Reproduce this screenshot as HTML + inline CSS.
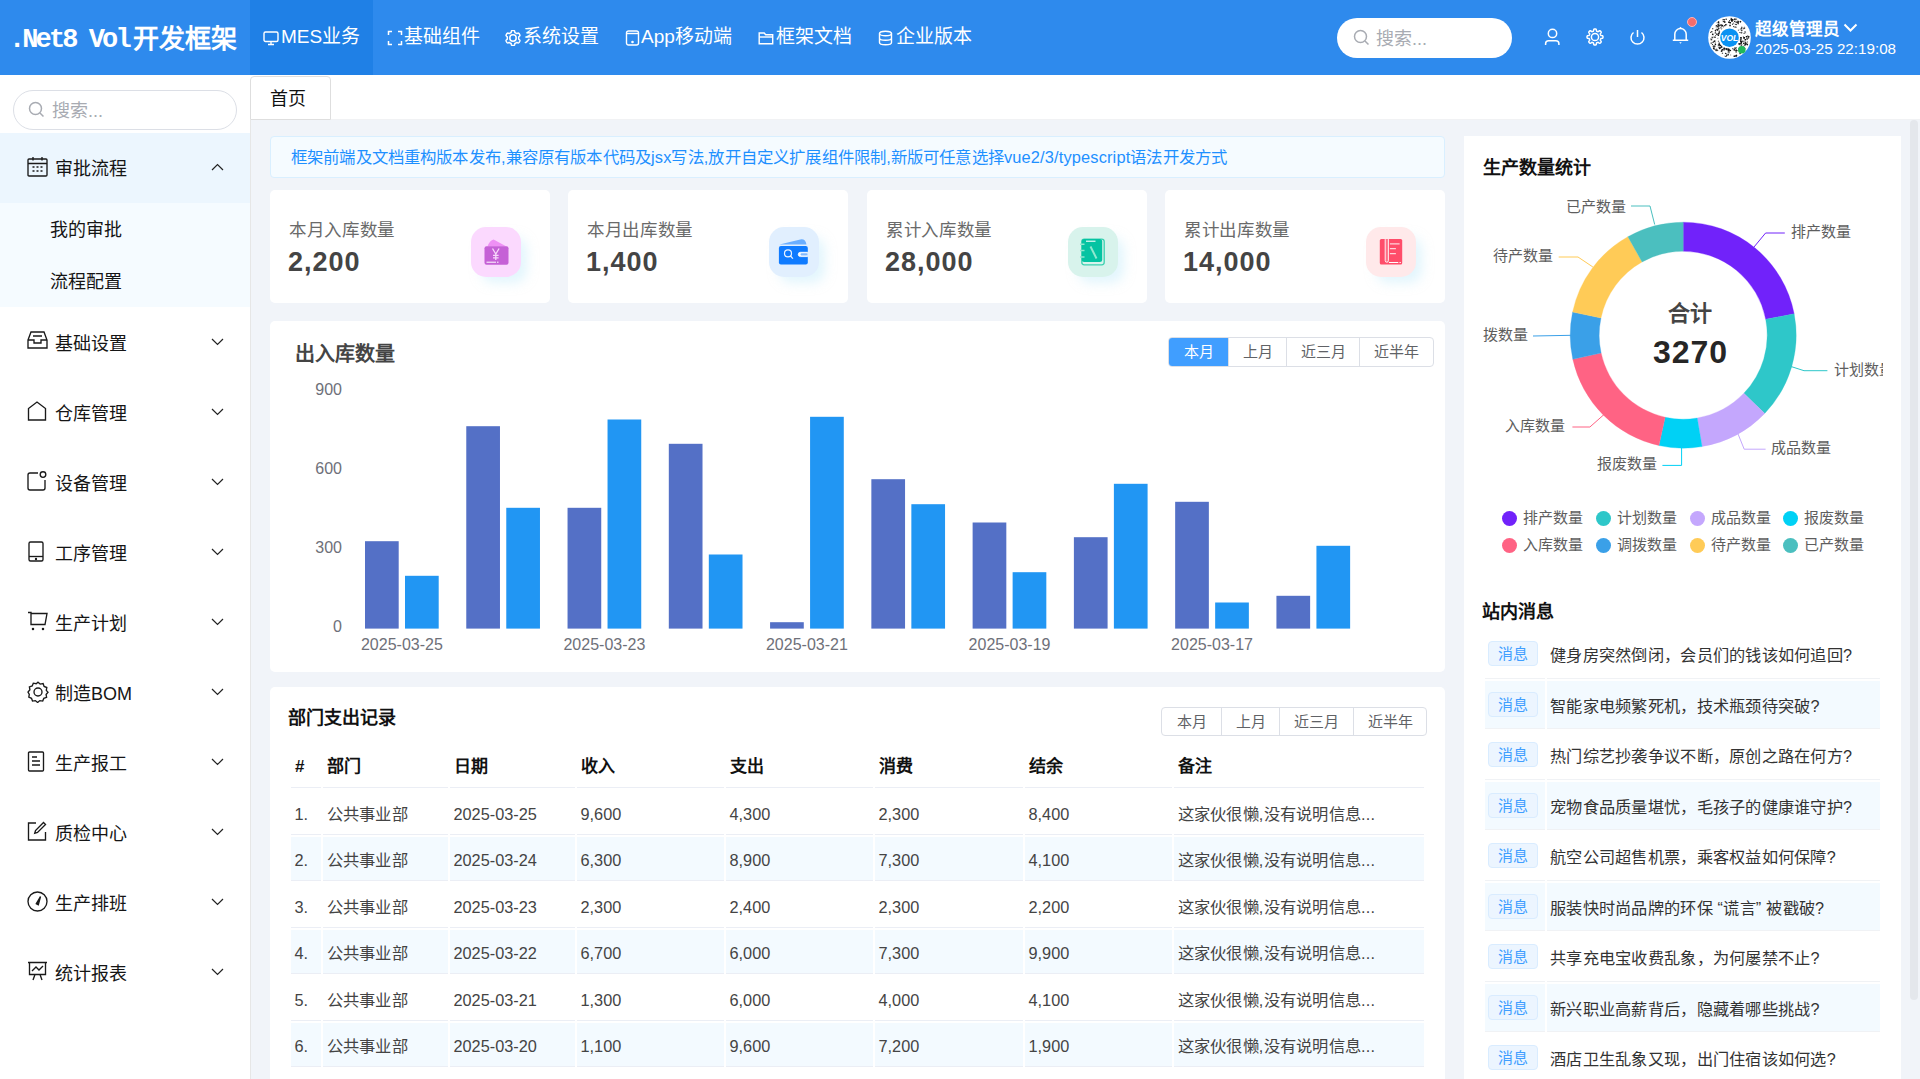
<!DOCTYPE html><html lang="zh-CN"><head><meta charset="utf-8"><style>
*{box-sizing:border-box;margin:0;padding:0}
html,body{width:1920px;height:1079px;overflow:hidden;background:#f1f4f9;font-family:"Liberation Sans",sans-serif;color:#303133}
.a{position:absolute;white-space:nowrap}
#hdr{position:absolute;left:0;top:0;width:1920px;height:75px;background:#2e8aed}
.nav{position:absolute;top:26px;height:22px;line-height:22px;color:#fff;font-size:19px;white-space:nowrap}
.mt{position:absolute;font-size:18px;color:#151515;line-height:20px;white-space:nowrap}
.ic{position:absolute}
.card{position:absolute;background:#fff;border-radius:5px}
.lbl{position:absolute;letter-spacing:.7px;font-size:17.5px;color:#6a6a6a;line-height:20px;white-space:nowrap}
.val{position:absolute;font-size:27px;font-weight:bold;color:#444;line-height:30px;white-space:nowrap;letter-spacing:1px}
.ib{position:absolute;width:50px;height:50px;border-radius:15px;box-shadow:8px 8px 11px -2px rgba(200,238,252,.5)}
.bg{position:absolute;display:flex;border:1px solid #dcdfe6;border-radius:4px;overflow:hidden;background:#fff}
.bg div{border-left:1px solid #dcdfe6;text-align:center;color:#606266;font-size:15px}
.bg div:first-child{border-left:none}
.th{position:absolute;font-size:17px;font-weight:bold;color:#111;line-height:20px;white-space:nowrap}
.td{position:absolute;font-size:16.3px;color:#444;line-height:20px;white-space:nowrap}
.tag{position:absolute;width:50px;height:25px;background:#ecf5ff;border:1px solid #d9ecff;border-radius:4px;color:#409eff;font-size:15px;line-height:23px;text-align:center}
.msg{position:absolute;letter-spacing:.28px;font-size:16.2px;color:#333;line-height:20px;white-space:nowrap}
.pl{position:absolute;font-size:15px;color:#5e5e5e;line-height:18px;white-space:nowrap}
</style></head><body>
<div id="hdr">
<div class="a" style="left:250px;top:0;width:123px;height:75px;background:#1f80e6"></div>
<div class="a" style="left:9px;top:18px;color:#fff;font-weight:bold;font-size:27px;line-height:40px"><span style="font-family:'Liberation Mono',monospace;letter-spacing:-2.9px">.Net8 Vol</span><span style="font-size:26px;position:relative;top:1px;margin-left:4px">开发框架</span></div>
<div class="a" style="left:263px;top:30px;line-height:0"><svg width="16" height="16" viewBox="0 0 16 16" fill="none" stroke="#fff" stroke-width="1.4"><rect x="1" y="2" width="14" height="9.5" rx="1.5"/><path d="M5 14.5h6M8 11.5v3"/></svg></div>
<div class="nav" style="left:281px">MES业务</div>
<div class="a" style="left:387px;top:30px;line-height:0"><svg width="16" height="16" viewBox="0 0 16 16" fill="none" stroke="#fff" stroke-width="1.5"><path d="M5 1.5H1.5V5M11 1.5h3.5V5M1.5 11v3.5H5M14.5 11v3.5H11"/></svg></div>
<div class="nav" style="left:404px">基础组件</div>
<div class="a" style="left:505px;top:30px;line-height:0"><svg width="16" height="16" viewBox="0 0 16 16" fill="none" stroke="#fff" stroke-width="1.5"><path d="M8.00 0.50L8.39 0.52L8.78 0.55L9.17 0.64L9.51 0.90L9.71 1.62L9.84 2.35L10.06 2.63L10.32 2.78L10.59 2.92L10.85 3.06L11.11 3.21L11.36 3.38L11.62 3.53L11.98 3.58L12.67 3.33L13.39 3.14L13.79 3.31L14.06 3.60L14.29 3.92L14.49 4.25L14.68 4.60L14.84 4.96L14.95 5.33L14.90 5.76L14.38 6.29L13.81 6.76L13.68 7.10L13.68 7.40L13.70 7.70L13.70 8.00L13.70 8.30L13.68 8.60L13.68 8.90L13.81 9.24L14.38 9.71L14.90 10.24L14.95 10.67L14.84 11.04L14.68 11.40L14.49 11.75L14.29 12.08L14.06 12.40L13.79 12.69L13.39 12.86L12.67 12.67L11.98 12.42L11.62 12.47L11.36 12.62L11.11 12.79L10.85 12.94L10.59 13.08L10.32 13.22L10.06 13.37L9.84 13.65L9.71 14.38L9.51 15.10L9.17 15.36L8.78 15.45L8.39 15.48L8.00 15.50L7.61 15.48L7.22 15.45L6.83 15.36L6.49 15.10L6.29 14.38L6.16 13.65L5.94 13.37L5.68 13.22L5.41 13.08L5.15 12.94L4.89 12.79L4.64 12.62L4.38 12.47L4.02 12.42L3.33 12.67L2.61 12.86L2.21 12.69L1.94 12.40L1.71 12.08L1.51 11.75L1.32 11.40L1.16 11.04L1.05 10.67L1.10 10.24L1.62 9.71L2.19 9.24L2.32 8.90L2.32 8.60L2.30 8.30L2.30 8.00L2.30 7.70L2.32 7.40L2.32 7.10L2.19 6.76L1.62 6.29L1.10 5.76L1.05 5.33L1.16 4.96L1.32 4.60L1.51 4.25L1.71 3.92L1.94 3.60L2.21 3.31L2.61 3.14L3.33 3.33L4.02 3.58L4.38 3.53L4.64 3.38L4.89 3.21L5.15 3.06L5.41 2.92L5.68 2.78L5.94 2.63L6.16 2.35L6.29 1.62L6.49 0.90L6.83 0.64L7.22 0.55L7.61 0.52Z"/><circle cx="8" cy="8" r="3.2"/></svg></div>
<div class="nav" style="left:523px">系统设置</div>
<div class="a" style="left:625px;top:30px;line-height:0"><svg width="15" height="16" viewBox="0 0 15 16" fill="none" stroke="#fff" stroke-width="1.4"><rect x="1.5" y="1" width="12" height="14" rx="2"/><path d="M2 3.5h11"/><circle cx="7.5" cy="12" r=".6" fill="#fff"/></svg></div>
<div class="nav" style="left:641px">App移动端</div>
<div class="a" style="left:758px;top:30px;line-height:0"><svg width="16" height="16" viewBox="0 0 16 16" fill="none" stroke="#fff" stroke-width="1.4"><path d="M1.2 3h5l1.5 1.8h7v9H1.2z"/><path d="M1.2 7h13.6"/></svg></div>
<div class="nav" style="left:776px">框架文档</div>
<div class="a" style="left:878px;top:30px;line-height:0"><svg width="15" height="16" viewBox="0 0 15 16" fill="none" stroke="#fff" stroke-width="1.4"><ellipse cx="7.5" cy="3.5" rx="6" ry="2.3"/><path d="M1.5 3.5v9c0 1.3 2.7 2.3 6 2.3s6-1 6-2.3v-9M1.5 8c0 1.3 2.7 2.3 6 2.3s6-1 6-2.3"/></svg></div>
<div class="nav" style="left:896px">企业版本</div>
<div class="a" style="left:1337px;top:18px;width:175px;height:40px;border-radius:20px;background:#fff"></div>
<svg class="a" style="left:1353px;top:29px" width="17" height="17" viewBox="0 0 17 17" fill="none" stroke="#a8abb2" stroke-width="1.5"><circle cx="7.5" cy="7.5" r="6"/><path d="M12 12l3.5 3.5"/></svg>
<div class="a" style="left:1376px;top:28.5px;font-size:18px;line-height:20px;color:#a8abb2">搜索...</div>
<svg class="a" style="left:1544px;top:28px" width="17" height="18" viewBox="0 0 17 18" fill="none" stroke="#fff" stroke-width="1.5"><circle cx="8.5" cy="5.4" r="4.2"/><path d="M1.6 17v-1.3a3 3 0 0 1 3-3h7.3a3 3 0 0 1 3 3V17"/></svg>
<svg class="a" style="left:1586px;top:28px" width="18" height="18" viewBox="0 0 18 18" fill="none" stroke="#fff" stroke-width="1.5"><path d="M9.00 1.01L9.31 1.02L9.62 1.06L9.93 1.16L10.20 1.45L10.37 2.13L10.48 2.82L10.66 3.13L10.86 3.26L11.08 3.35L11.30 3.44L11.52 3.54L11.74 3.62L11.98 3.68L12.32 3.58L12.89 3.18L13.50 2.81L13.89 2.80L14.17 2.94L14.42 3.14L14.65 3.35L14.86 3.58L15.06 3.83L15.20 4.11L15.19 4.50L14.82 5.11L14.42 5.68L14.32 6.02L14.38 6.26L14.46 6.48L14.56 6.70L14.65 6.92L14.74 7.14L14.87 7.34L15.18 7.52L15.87 7.63L16.55 7.80L16.84 8.07L16.94 8.38L16.98 8.69L16.99 9.00L16.98 9.31L16.94 9.62L16.84 9.93L16.55 10.20L15.87 10.37L15.18 10.48L14.87 10.66L14.74 10.86L14.65 11.08L14.56 11.30L14.46 11.52L14.38 11.74L14.32 11.98L14.42 12.32L14.82 12.89L15.19 13.50L15.20 13.89L15.06 14.17L14.86 14.42L14.65 14.65L14.42 14.86L14.17 15.06L13.89 15.20L13.50 15.19L12.89 14.82L12.32 14.42L11.98 14.32L11.74 14.38L11.52 14.46L11.30 14.56L11.08 14.65L10.86 14.74L10.66 14.87L10.48 15.18L10.37 15.87L10.20 16.55L9.93 16.84L9.62 16.94L9.31 16.98L9.00 16.99L8.69 16.98L8.38 16.94L8.07 16.84L7.80 16.55L7.63 15.87L7.52 15.18L7.34 14.87L7.14 14.74L6.92 14.65L6.70 14.56L6.48 14.46L6.26 14.38L6.02 14.32L5.68 14.42L5.11 14.82L4.50 15.19L4.11 15.20L3.83 15.06L3.58 14.86L3.35 14.65L3.14 14.42L2.94 14.17L2.80 13.89L2.81 13.50L3.18 12.89L3.58 12.32L3.68 11.98L3.62 11.74L3.54 11.52L3.44 11.30L3.35 11.08L3.26 10.86L3.13 10.66L2.82 10.48L2.13 10.37L1.45 10.20L1.16 9.93L1.06 9.62L1.02 9.31L1.01 9.00L1.02 8.69L1.06 8.38L1.16 8.07L1.45 7.80L2.13 7.63L2.82 7.52L3.13 7.34L3.26 7.14L3.35 6.92L3.44 6.70L3.54 6.48L3.62 6.26L3.68 6.02L3.58 5.68L3.18 5.11L2.81 4.50L2.80 4.11L2.94 3.83L3.14 3.58L3.35 3.35L3.58 3.14L3.83 2.94L4.11 2.80L4.50 2.81L5.11 3.18L5.68 3.58L6.02 3.68L6.26 3.62L6.48 3.54L6.70 3.44L6.92 3.35L7.14 3.26L7.34 3.13L7.52 2.82L7.63 2.13L7.80 1.45L8.07 1.16L8.38 1.06L8.69 1.02Z"/><circle cx="9" cy="9" r="3.6"/></svg>
<svg class="a" style="left:1629px;top:29px" width="17" height="17" viewBox="0 0 17 17" fill="none" stroke="#fff" stroke-width="1.5"><path d="M8.5 1v7"/><path d="M4.5 3.5a6.5 6.5 0 1 0 8 0"/></svg>
<svg class="a" style="left:1672px;top:26px" width="17" height="19" viewBox="0 0 17 19" fill="none" stroke="#fff" stroke-width="1.5"><path d="M2.8 14V8.2a5.7 5.7 0 0 1 11.4 0V14M.8 14.2h15.4"/><circle cx="8.5" cy="1.8" r=".9" fill="#fff" stroke="none"/><path d="M7.3 16.3h2.4l-1.2 1.5z" fill="#fff" stroke="none"/></svg>
<div class="a" style="left:1687px;top:17px;width:10px;height:10px;border-radius:5px;background:#f56c6c;border:1px solid #ffb3b3"></div>
<svg class="a" style="left:1708px;top:16px" width="43" height="43" viewBox="0 0 43 43"><circle cx="21.5" cy="21.5" r="21.3" fill="#fff"/><rect x="16.2" y="32.0" width="0.8" height="0.8" fill="#111" opacity="1" transform="rotate(117 16.2 32.0)"/><rect x="26.4" y="11.3" width="0.8" height="0.8" fill="#111" opacity="1" transform="rotate(296 26.4 11.3)"/><rect x="35.3" y="24.8" width="0.8" height="0.8" fill="#111" opacity="1" transform="rotate(13 35.3 24.8)"/><rect x="33.4" y="29.1" width="0.8" height="0.8" fill="#111" opacity="1" transform="rotate(33 33.4 29.1)"/><rect x="11.0" y="10.2" width="0.8" height="0.8" fill="#111" opacity="0.5" transform="rotate(227 11.0 10.2)"/><rect x="33.3" y="25.3" width="1.0" height="1.0" fill="#111" opacity="0.8" transform="rotate(18 33.3 25.3)"/><rect x="8.3" y="28.8" width="1.2" height="1.2" fill="#111" opacity="1" transform="rotate(151 8.3 28.8)"/><rect x="33.7" y="30.8" width="1.0" height="1.0" fill="#111" opacity="0.8" transform="rotate(37 33.7 30.8)"/><rect x="35.0" y="31.0" width="0.8" height="0.8" fill="#111" opacity="1" transform="rotate(35 35.0 31.0)"/><rect x="6.5" y="21.8" width="1.2" height="1.2" fill="#111" opacity="0.5" transform="rotate(179 6.5 21.8)"/><rect x="9.2" y="14.2" width="1.2" height="1.2" fill="#111" opacity="1" transform="rotate(211 9.2 14.2)"/><rect x="26.0" y="5.7" width="1.0" height="1.0" fill="#111" opacity="1" transform="rotate(286 26.0 5.7)"/><rect x="8.1" y="14.8" width="1.2" height="1.2" fill="#111" opacity="0.5" transform="rotate(207 8.1 14.8)"/><rect x="17.1" y="39.8" width="0.8" height="0.8" fill="#111" opacity="0.5" transform="rotate(104 17.1 39.8)"/><rect x="28.3" y="33.0" width="1.5" height="1.5" fill="#111" opacity="0.5" transform="rotate(59 28.3 33.0)"/><rect x="37.2" y="25.4" width="1.2" height="1.2" fill="#111" opacity="0.8" transform="rotate(14 37.2 25.4)"/><rect x="16.3" y="6.9" width="1.5" height="1.5" fill="#111" opacity="1" transform="rotate(250 16.3 6.9)"/><rect x="31.4" y="5.9" width="1.5" height="1.5" fill="#111" opacity="1" transform="rotate(302 31.4 5.9)"/><rect x="36.8" y="27.6" width="1.5" height="1.5" fill="#111" opacity="0.8" transform="rotate(22 36.8 27.6)"/><rect x="17.7" y="3.9" width="1.2" height="1.2" fill="#111" opacity="1" transform="rotate(258 17.7 3.9)"/><rect x="34.1" y="16.6" width="0.8" height="0.8" fill="#111" opacity="0.5" transform="rotate(339 34.1 16.6)"/><rect x="37.4" y="27.7" width="1.0" height="1.0" fill="#111" opacity="1" transform="rotate(21 37.4 27.7)"/><rect x="6.8" y="32.4" width="1.5" height="1.5" fill="#111" opacity="1" transform="rotate(143 6.8 32.4)"/><rect x="28.5" y="33.5" width="1.2" height="1.2" fill="#111" opacity="1" transform="rotate(60 28.5 33.5)"/><rect x="29.0" y="5.3" width="1.2" height="1.2" fill="#111" opacity="0.5" transform="rotate(295 29.0 5.3)"/><rect x="37.7" y="20.1" width="1.5" height="1.5" fill="#111" opacity="1" transform="rotate(355 37.7 20.1)"/><rect x="28.5" y="31.2" width="1.0" height="1.0" fill="#111" opacity="1" transform="rotate(54 28.5 31.2)"/><rect x="39.0" y="22.8" width="1.0" height="1.0" fill="#111" opacity="0.8" transform="rotate(4 39.0 22.8)"/><rect x="19.2" y="33.0" width="1.2" height="1.2" fill="#111" opacity="0.8" transform="rotate(101 19.2 33.0)"/><rect x="37.2" y="16.7" width="0.8" height="0.8" fill="#111" opacity="0.5" transform="rotate(343 37.2 16.7)"/><rect x="35.3" y="11.4" width="1.5" height="1.5" fill="#111" opacity="0.5" transform="rotate(324 35.3 11.4)"/><rect x="12.3" y="28.2" width="1.5" height="1.5" fill="#111" opacity="1" transform="rotate(144 12.3 28.2)"/><rect x="28.4" y="39.1" width="1.5" height="1.5" fill="#111" opacity="1" transform="rotate(69 28.4 39.1)"/><rect x="33.5" y="31.4" width="0.8" height="0.8" fill="#111" opacity="1" transform="rotate(40 33.5 31.4)"/><rect x="7.7" y="15.4" width="1.2" height="1.2" fill="#111" opacity="1" transform="rotate(204 7.7 15.4)"/><rect x="32.6" y="26.7" width="1.5" height="1.5" fill="#111" opacity="1" transform="rotate(25 32.6 26.7)"/><rect x="9.1" y="7.6" width="1.2" height="1.2" fill="#111" opacity="0.5" transform="rotate(228 9.1 7.6)"/><rect x="34.2" y="33.9" width="1.5" height="1.5" fill="#111" opacity="0.5" transform="rotate(44 34.2 33.9)"/><rect x="10.3" y="22.6" width="0.8" height="0.8" fill="#111" opacity="0.8" transform="rotate(174 10.3 22.6)"/><rect x="20.6" y="7.0" width="1.0" height="1.0" fill="#111" opacity="1" transform="rotate(267 20.6 7.0)"/><rect x="26.7" y="39.4" width="1.2" height="1.2" fill="#111" opacity="1" transform="rotate(74 26.7 39.4)"/><rect x="14.8" y="4.5" width="1.2" height="1.2" fill="#111" opacity="1" transform="rotate(248 14.8 4.5)"/><rect x="17.3" y="9.5" width="1.2" height="1.2" fill="#111" opacity="1" transform="rotate(251 17.3 9.5)"/><rect x="13.9" y="31.3" width="1.2" height="1.2" fill="#111" opacity="1" transform="rotate(128 13.9 31.3)"/><rect x="8.5" y="10.3" width="1.0" height="1.0" fill="#111" opacity="1" transform="rotate(221 8.5 10.3)"/><rect x="28.5" y="6.2" width="1.0" height="1.0" fill="#111" opacity="1" transform="rotate(295 28.5 6.2)"/><rect x="8.1" y="20.0" width="0.8" height="0.8" fill="#111" opacity="1" transform="rotate(186 8.1 20.0)"/><rect x="25.1" y="7.4" width="1.0" height="1.0" fill="#111" opacity="0.8" transform="rotate(284 25.1 7.4)"/><rect x="4.0" y="27.5" width="1.2" height="1.2" fill="#111" opacity="0.8" transform="rotate(161 4.0 27.5)"/><rect x="31.4" y="27.0" width="1.5" height="1.5" fill="#111" opacity="1" transform="rotate(29 31.4 27.0)"/><rect x="13.9" y="33.9" width="0.8" height="0.8" fill="#111" opacity="0.5" transform="rotate(122 13.9 33.9)"/><rect x="32.8" y="14.3" width="0.8" height="0.8" fill="#111" opacity="1" transform="rotate(327 32.8 14.3)"/><rect x="36.0" y="12.3" width="1.0" height="1.0" fill="#111" opacity="0.5" transform="rotate(328 36.0 12.3)"/><rect x="32.4" y="12.4" width="1.2" height="1.2" fill="#111" opacity="1" transform="rotate(320 32.4 12.4)"/><rect x="27.4" y="3.7" width="1.5" height="1.5" fill="#111" opacity="0.5" transform="rotate(288 27.4 3.7)"/><rect x="6.4" y="32.3" width="1.0" height="1.0" fill="#111" opacity="1" transform="rotate(144 6.4 32.3)"/><rect x="32.2" y="21.0" width="1.5" height="1.5" fill="#111" opacity="1" transform="rotate(358 32.2 21.0)"/><rect x="9.6" y="11.5" width="1.5" height="1.5" fill="#111" opacity="0.8" transform="rotate(220 9.6 11.5)"/><rect x="29.9" y="34.1" width="0.8" height="0.8" fill="#111" opacity="1" transform="rotate(56 29.9 34.1)"/><rect x="26.6" y="5.6" width="0.8" height="0.8" fill="#111" opacity="1" transform="rotate(288 26.6 5.6)"/><rect x="5.1" y="28.7" width="1.0" height="1.0" fill="#111" opacity="1" transform="rotate(156 5.1 28.7)"/><rect x="21.4" y="34.5" width="1.0" height="1.0" fill="#111" opacity="0.8" transform="rotate(91 21.4 34.5)"/><rect x="20.7" y="35.5" width="1.0" height="1.0" fill="#111" opacity="1" transform="rotate(93 20.7 35.5)"/><rect x="32.9" y="14.3" width="1.5" height="1.5" fill="#111" opacity="0.5" transform="rotate(328 32.9 14.3)"/><rect x="29.9" y="5.6" width="1.0" height="1.0" fill="#111" opacity="1" transform="rotate(298 29.9 5.6)"/><rect x="11.0" y="19.9" width="1.5" height="1.5" fill="#111" opacity="1" transform="rotate(188 11.0 19.9)"/><rect x="8.2" y="10.7" width="1.0" height="1.0" fill="#111" opacity="1" transform="rotate(219 8.2 10.7)"/><rect x="31.4" y="33.7" width="0.8" height="0.8" fill="#111" opacity="1" transform="rotate(51 31.4 33.7)"/><rect x="14.7" y="34.7" width="1.5" height="1.5" fill="#111" opacity="1" transform="rotate(117 14.7 34.7)"/><rect x="29.7" y="14.1" width="1.0" height="1.0" fill="#111" opacity="0.8" transform="rotate(318 29.7 14.1)"/><rect x="32.4" y="24.5" width="1.5" height="1.5" fill="#111" opacity="1" transform="rotate(15 32.4 24.5)"/><rect x="22.6" y="3.3" width="1.5" height="1.5" fill="#111" opacity="0.8" transform="rotate(274 22.6 3.3)"/><rect x="10.2" y="11.9" width="1.0" height="1.0" fill="#111" opacity="0.8" transform="rotate(221 10.2 11.9)"/><rect x="7.1" y="25.9" width="1.5" height="1.5" fill="#111" opacity="1" transform="rotate(163 7.1 25.9)"/><rect x="15.9" y="4.5" width="1.2" height="1.2" fill="#111" opacity="1" transform="rotate(252 15.9 4.5)"/><rect x="27.8" y="11.7" width="0.8" height="0.8" fill="#111" opacity="0.5" transform="rotate(302 27.8 11.7)"/><rect x="11.1" y="25.5" width="1.0" height="1.0" fill="#111" opacity="0.5" transform="rotate(159 11.1 25.5)"/><rect x="36.0" y="28.7" width="0.8" height="0.8" fill="#111" opacity="1" transform="rotate(26 36.0 28.7)"/><rect x="36.3" y="15.6" width="1.2" height="1.2" fill="#111" opacity="1" transform="rotate(338 36.3 15.6)"/><rect x="21.3" y="33.2" width="1.5" height="1.5" fill="#111" opacity="1" transform="rotate(91 21.3 33.2)"/><rect x="21.3" y="10.2" width="1.5" height="1.5" fill="#111" opacity="1" transform="rotate(269 21.3 10.2)"/><rect x="39.0" y="20.4" width="1.0" height="1.0" fill="#111" opacity="0.5" transform="rotate(356 39.0 20.4)"/><rect x="35.4" y="21.0" width="1.5" height="1.5" fill="#111" opacity="1" transform="rotate(358 35.4 21.0)"/><rect x="14.5" y="30.3" width="1.2" height="1.2" fill="#111" opacity="1" transform="rotate(128 14.5 30.3)"/><rect x="13.9" y="33.8" width="0.8" height="0.8" fill="#111" opacity="0.5" transform="rotate(122 13.9 33.8)"/><rect x="13.8" y="35.3" width="0.8" height="0.8" fill="#111" opacity="1" transform="rotate(119 13.8 35.3)"/><rect x="38.6" y="19.9" width="0.8" height="0.8" fill="#111" opacity="1" transform="rotate(355 38.6 19.9)"/><rect x="20.4" y="32.3" width="1.0" height="1.0" fill="#111" opacity="0.8" transform="rotate(96 20.4 32.3)"/><rect x="22.1" y="4.0" width="1.2" height="1.2" fill="#111" opacity="0.5" transform="rotate(272 22.1 4.0)"/><rect x="32.3" y="36.3" width="1.5" height="1.5" fill="#111" opacity="0.8" transform="rotate(54 32.3 36.3)"/><rect x="30.8" y="27.4" width="1.0" height="1.0" fill="#111" opacity="0.5" transform="rotate(32 30.8 27.4)"/><rect x="31.6" y="13.7" width="0.8" height="0.8" fill="#111" opacity="1" transform="rotate(322 31.6 13.7)"/><rect x="25.1" y="10.9" width="1.0" height="1.0" fill="#111" opacity="1" transform="rotate(289 25.1 10.9)"/><rect x="20.5" y="33.0" width="0.8" height="0.8" fill="#111" opacity="0.8" transform="rotate(95 20.5 33.0)"/><rect x="35.5" y="21.0" width="1.2" height="1.2" fill="#111" opacity="1" transform="rotate(358 35.5 21.0)"/><rect x="37.4" y="25.9" width="0.8" height="0.8" fill="#111" opacity="1" transform="rotate(16 37.4 25.9)"/><rect x="20.6" y="33.5" width="1.2" height="1.2" fill="#111" opacity="0.8" transform="rotate(94 20.6 33.5)"/><rect x="9.5" y="19.1" width="1.5" height="1.5" fill="#111" opacity="1" transform="rotate(191 9.5 19.1)"/><rect x="19.3" y="38.7" width="1.2" height="1.2" fill="#111" opacity="1" transform="rotate(97 19.3 38.7)"/><rect x="38.2" y="23.1" width="1.0" height="1.0" fill="#111" opacity="0.5" transform="rotate(6 38.2 23.1)"/><rect x="21.9" y="35.8" width="1.5" height="1.5" fill="#111" opacity="0.5" transform="rotate(88 21.9 35.8)"/><rect x="4.2" y="16.4" width="1.2" height="1.2" fill="#111" opacity="1" transform="rotate(197 4.2 16.4)"/><rect x="34.8" y="20.0" width="1.0" height="1.0" fill="#111" opacity="0.5" transform="rotate(354 34.8 20.0)"/><rect x="40.3" y="20.3" width="1.0" height="1.0" fill="#111" opacity="1" transform="rotate(356 40.3 20.3)"/><rect x="36.7" y="28.7" width="1.2" height="1.2" fill="#111" opacity="0.5" transform="rotate(25 36.7 28.7)"/><rect x="27.3" y="31.1" width="1.5" height="1.5" fill="#111" opacity="0.8" transform="rotate(59 27.3 31.1)"/><rect x="8.2" y="12.0" width="0.8" height="0.8" fill="#111" opacity="0.5" transform="rotate(216 8.2 12.0)"/><rect x="26.6" y="33.2" width="0.8" height="0.8" fill="#111" opacity="0.8" transform="rotate(67 26.6 33.2)"/><rect x="12.8" y="31.5" width="1.2" height="1.2" fill="#111" opacity="1" transform="rotate(131 12.8 31.5)"/><rect x="39.1" y="25.4" width="1.0" height="1.0" fill="#111" opacity="0.8" transform="rotate(12 39.1 25.4)"/><rect x="27.0" y="33.7" width="0.8" height="0.8" fill="#111" opacity="0.5" transform="rotate(66 27.0 33.7)"/><rect x="18.6" y="37.3" width="1.0" height="1.0" fill="#111" opacity="1" transform="rotate(100 18.6 37.3)"/><rect x="36.2" y="30.9" width="1.0" height="1.0" fill="#111" opacity="0.5" transform="rotate(33 36.2 30.9)"/><rect x="9.7" y="14.3" width="1.2" height="1.2" fill="#111" opacity="0.8" transform="rotate(211 9.7 14.3)"/><rect x="13.8" y="13.3" width="1.0" height="1.0" fill="#111" opacity="0.5" transform="rotate(227 13.8 13.3)"/><rect x="23.0" y="4.9" width="1.5" height="1.5" fill="#111" opacity="1" transform="rotate(275 23.0 4.9)"/><rect x="18.1" y="36.9" width="1.0" height="1.0" fill="#111" opacity="1" transform="rotate(102 18.1 36.9)"/><rect x="29.0" y="6.7" width="1.5" height="1.5" fill="#111" opacity="1" transform="rotate(297 29.0 6.7)"/><rect x="35.8" y="12.4" width="0.8" height="0.8" fill="#111" opacity="1" transform="rotate(328 35.8 12.4)"/><rect x="30.8" y="27.0" width="1.2" height="1.2" fill="#111" opacity="1" transform="rotate(31 30.8 27.0)"/><rect x="11.3" y="31.5" width="0.8" height="0.8" fill="#111" opacity="1" transform="rotate(136 11.3 31.5)"/><rect x="10.1" y="9.9" width="1.5" height="1.5" fill="#111" opacity="0.8" transform="rotate(225 10.1 9.9)"/><rect x="38.8" y="21.9" width="0.8" height="0.8" fill="#111" opacity="1" transform="rotate(1 38.8 21.9)"/><rect x="21.1" y="7.0" width="0.8" height="0.8" fill="#111" opacity="0.8" transform="rotate(268 21.1 7.0)"/><rect x="23.1" y="38.4" width="1.0" height="1.0" fill="#111" opacity="0.5" transform="rotate(85 23.1 38.4)"/><rect x="7.8" y="22.0" width="1.5" height="1.5" fill="#111" opacity="0.8" transform="rotate(178 7.8 22.0)"/><rect x="23.2" y="5.8" width="1.0" height="1.0" fill="#111" opacity="1" transform="rotate(276 23.2 5.8)"/><rect x="10.7" y="13.7" width="1.2" height="1.2" fill="#111" opacity="1" transform="rotate(216 10.7 13.7)"/><rect x="32.5" y="22.4" width="1.2" height="1.2" fill="#111" opacity="1" transform="rotate(4 32.5 22.4)"/><rect x="15.7" y="6.3" width="1.2" height="1.2" fill="#111" opacity="0.8" transform="rotate(249 15.7 6.3)"/><rect x="7.4" y="24.7" width="0.8" height="0.8" fill="#111" opacity="1" transform="rotate(167 7.4 24.7)"/><rect x="17.3" y="31.9" width="1.5" height="1.5" fill="#111" opacity="1" transform="rotate(112 17.3 31.9)"/><rect x="18.8" y="32.3" width="1.5" height="1.5" fill="#111" opacity="0.8" transform="rotate(104 18.8 32.3)"/><rect x="7.6" y="33.4" width="1.0" height="1.0" fill="#111" opacity="1" transform="rotate(139 7.6 33.4)"/><rect x="11.3" y="15.8" width="1.2" height="1.2" fill="#111" opacity="0.8" transform="rotate(209 11.3 15.8)"/><rect x="33.3" y="34.4" width="1.2" height="1.2" fill="#111" opacity="1" transform="rotate(48 33.3 34.4)"/><rect x="17.9" y="9.6" width="1.5" height="1.5" fill="#111" opacity="0.5" transform="rotate(253 17.9 9.6)"/><rect x="31.9" y="23.1" width="1.5" height="1.5" fill="#111" opacity="0.5" transform="rotate(9 31.9 23.1)"/><rect x="7.7" y="30.8" width="1.5" height="1.5" fill="#111" opacity="0.8" transform="rotate(146 7.7 30.8)"/><rect x="13.3" y="29.6" width="1.2" height="1.2" fill="#111" opacity="1" transform="rotate(135 13.3 29.6)"/><rect x="15.5" y="33.4" width="1.5" height="1.5" fill="#111" opacity="1" transform="rotate(117 15.5 33.4)"/><rect x="32.8" y="17.0" width="0.8" height="0.8" fill="#111" opacity="0.8" transform="rotate(338 32.8 17.0)"/><rect x="21.3" y="32.6" width="1.5" height="1.5" fill="#111" opacity="1" transform="rotate(91 21.3 32.6)"/><rect x="12.4" y="32.4" width="1.2" height="1.2" fill="#111" opacity="1" transform="rotate(130 12.4 32.4)"/><rect x="19.4" y="32.2" width="1.2" height="1.2" fill="#111" opacity="1" transform="rotate(101 19.4 32.2)"/><rect x="21.6" y="34.3" width="1.2" height="1.2" fill="#111" opacity="1" transform="rotate(90 21.6 34.3)"/><rect x="24.0" y="4.5" width="1.5" height="1.5" fill="#111" opacity="1" transform="rotate(278 24.0 4.5)"/><rect x="27.5" y="6.8" width="1.0" height="1.0" fill="#111" opacity="1" transform="rotate(292 27.5 6.8)"/><rect x="37.4" y="26.6" width="1.5" height="1.5" fill="#111" opacity="1" transform="rotate(18 37.4 26.6)"/><rect x="13.5" y="11.3" width="0.8" height="0.8" fill="#111" opacity="1" transform="rotate(232 13.5 11.3)"/><rect x="28.2" y="33.8" width="1.2" height="1.2" fill="#111" opacity="0.8" transform="rotate(61 28.2 33.8)"/><rect x="20.9" y="38.3" width="1.2" height="1.2" fill="#111" opacity="0.5" transform="rotate(92 20.9 38.3)"/><rect x="14.2" y="10.7" width="1.5" height="1.5" fill="#111" opacity="1" transform="rotate(236 14.2 10.7)"/><rect x="27.4" y="31.8" width="1.0" height="1.0" fill="#111" opacity="0.5" transform="rotate(60 27.4 31.8)"/><rect x="7.9" y="17.0" width="1.2" height="1.2" fill="#111" opacity="0.5" transform="rotate(198 7.9 17.0)"/><rect x="7.9" y="28.2" width="1.0" height="1.0" fill="#111" opacity="1" transform="rotate(154 7.9 28.2)"/><rect x="28.4" y="35.1" width="1.2" height="1.2" fill="#111" opacity="1" transform="rotate(63 28.4 35.1)"/><rect x="9.7" y="34.3" width="1.0" height="1.0" fill="#111" opacity="1" transform="rotate(133 9.7 34.3)"/><rect x="21.5" y="7.5" width="1.5" height="1.5" fill="#111" opacity="1" transform="rotate(270 21.5 7.5)"/><rect x="11.9" y="30.8" width="0.8" height="0.8" fill="#111" opacity="0.5" transform="rotate(136 11.9 30.8)"/><rect x="18.3" y="39.9" width="1.0" height="1.0" fill="#111" opacity="1" transform="rotate(100 18.3 39.9)"/><rect x="36.6" y="31.5" width="1.5" height="1.5" fill="#111" opacity="0.5" transform="rotate(33 36.6 31.5)"/><rect x="12.9" y="10.3" width="1.2" height="1.2" fill="#111" opacity="1" transform="rotate(232 12.9 10.3)"/><rect x="31.3" y="31.6" width="1.5" height="1.5" fill="#111" opacity="0.5" transform="rotate(46 31.3 31.6)"/><rect x="35.3" y="21.5" width="1.5" height="1.5" fill="#111" opacity="0.5" transform="rotate(0 35.3 21.5)"/><rect x="21.6" y="32.9" width="1.0" height="1.0" fill="#111" opacity="1" transform="rotate(89 21.6 32.9)"/><rect x="5.4" y="19.2" width="1.5" height="1.5" fill="#111" opacity="1" transform="rotate(188 5.4 19.2)"/><rect x="11.2" y="18.1" width="1.0" height="1.0" fill="#111" opacity="1" transform="rotate(199 11.2 18.1)"/><rect x="11.7" y="16.9" width="1.2" height="1.2" fill="#111" opacity="1" transform="rotate(205 11.7 16.9)"/><rect x="11.0" y="10.8" width="1.5" height="1.5" fill="#111" opacity="1" transform="rotate(226 11.0 10.8)"/><rect x="32.1" y="29.1" width="1.0" height="1.0" fill="#111" opacity="0.5" transform="rotate(36 32.1 29.1)"/><rect x="20.3" y="38.7" width="0.8" height="0.8" fill="#111" opacity="1" transform="rotate(94 20.3 38.7)"/><rect x="3.1" y="17.1" width="1.2" height="1.2" fill="#111" opacity="0.8" transform="rotate(193 3.1 17.1)"/><rect x="10.4" y="7.3" width="1.5" height="1.5" fill="#111" opacity="1" transform="rotate(232 10.4 7.3)"/><rect x="11.2" y="18.4" width="1.5" height="1.5" fill="#111" opacity="0.8" transform="rotate(197 11.2 18.4)"/><rect x="32.9" y="25.6" width="1.5" height="1.5" fill="#111" opacity="1" transform="rotate(20 32.9 25.6)"/><rect x="20.8" y="37.7" width="1.2" height="1.2" fill="#111" opacity="1" transform="rotate(93 20.8 37.7)"/><rect x="5.1" y="22.2" width="1.5" height="1.5" fill="#111" opacity="0.8" transform="rotate(177 5.1 22.2)"/><rect x="16.5" y="10.4" width="1.2" height="1.2" fill="#111" opacity="1" transform="rotate(246 16.5 10.4)"/><rect x="26.7" y="39.5" width="1.2" height="1.2" fill="#111" opacity="1" transform="rotate(74 26.7 39.5)"/><rect x="23.0" y="33.8" width="1.2" height="1.2" fill="#111" opacity="1" transform="rotate(83 23.0 33.8)"/><rect x="35.5" y="17.1" width="1.0" height="1.0" fill="#111" opacity="1" transform="rotate(343 35.5 17.1)"/><rect x="3.3" y="23.2" width="0.8" height="0.8" fill="#111" opacity="1" transform="rotate(175 3.3 23.2)"/><rect x="31.2" y="16.3" width="0.8" height="0.8" fill="#111" opacity="1" transform="rotate(332 31.2 16.3)"/><rect x="7.2" y="29.9" width="1.0" height="1.0" fill="#111" opacity="0.5" transform="rotate(150 7.2 29.9)"/><rect x="5.8" y="26.7" width="1.2" height="1.2" fill="#111" opacity="1" transform="rotate(162 5.8 26.7)"/><rect x="39.9" y="21.2" width="1.2" height="1.2" fill="#111" opacity="1" transform="rotate(359 39.9 21.2)"/><rect x="28.8" y="38.5" width="1.5" height="1.5" fill="#111" opacity="1" transform="rotate(67 28.8 38.5)"/><rect x="15.2" y="36.9" width="1.2" height="1.2" fill="#111" opacity="0.8" transform="rotate(112 15.2 36.9)"/><rect x="10.8" y="25.5" width="0.8" height="0.8" fill="#111" opacity="0.8" transform="rotate(159 10.8 25.5)"/><rect x="33.8" y="28.3" width="0.8" height="0.8" fill="#111" opacity="1" transform="rotate(29 33.8 28.3)"/><rect x="9.1" y="33.2" width="1.2" height="1.2" fill="#111" opacity="0.5" transform="rotate(137 9.1 33.2)"/><rect x="35.5" y="30.1" width="1.0" height="1.0" fill="#111" opacity="0.8" transform="rotate(32 35.5 30.1)"/><rect x="7.7" y="17.8" width="1.2" height="1.2" fill="#111" opacity="0.8" transform="rotate(195 7.7 17.8)"/><rect x="20.3" y="7.0" width="1.5" height="1.5" fill="#111" opacity="1" transform="rotate(265 20.3 7.0)"/><rect x="27.9" y="5.8" width="0.8" height="0.8" fill="#111" opacity="0.5" transform="rotate(292 27.9 5.8)"/><rect x="32.3" y="23.9" width="0.8" height="0.8" fill="#111" opacity="0.8" transform="rotate(13 32.3 23.9)"/><rect x="25.2" y="31.9" width="1.2" height="1.2" fill="#111" opacity="0.8" transform="rotate(70 25.2 31.9)"/><rect x="18.9" y="40.0" width="0.8" height="0.8" fill="#111" opacity="0.8" transform="rotate(98 18.9 40.0)"/><rect x="21.1" y="5.1" width="1.2" height="1.2" fill="#111" opacity="0.8" transform="rotate(269 21.1 5.1)"/><rect x="38.4" y="21.9" width="0.8" height="0.8" fill="#111" opacity="1" transform="rotate(1 38.4 21.9)"/><rect x="26.7" y="11.4" width="1.5" height="1.5" fill="#111" opacity="0.5" transform="rotate(297 26.7 11.4)"/><rect x="26.0" y="3.8" width="1.5" height="1.5" fill="#111" opacity="1" transform="rotate(284 26.0 3.8)"/><rect x="32.3" y="16.2" width="1.2" height="1.2" fill="#111" opacity="1" transform="rotate(334 32.3 16.2)"/><rect x="11.1" y="13.2" width="1.2" height="1.2" fill="#111" opacity="0.5" transform="rotate(219 11.1 13.2)"/><rect x="10.4" y="34.6" width="0.8" height="0.8" fill="#111" opacity="1" transform="rotate(130 10.4 34.6)"/><rect x="12.3" y="29.0" width="1.5" height="1.5" fill="#111" opacity="1" transform="rotate(141 12.3 29.0)"/><rect x="12.9" y="9.7" width="1.2" height="1.2" fill="#111" opacity="1" transform="rotate(234 12.9 9.7)"/><rect x="39.4" y="19.3" width="0.8" height="0.8" fill="#111" opacity="0.8" transform="rotate(353 39.4 19.3)"/><rect x="12.8" y="12.8" width="1.5" height="1.5" fill="#111" opacity="0.5" transform="rotate(225 12.8 12.8)"/><rect x="40.2" y="20.1" width="1.0" height="1.0" fill="#111" opacity="1" transform="rotate(356 40.2 20.1)"/><rect x="31.2" y="32.2" width="1.0" height="1.0" fill="#111" opacity="1" transform="rotate(48 31.2 32.2)"/><rect x="23.9" y="8.7" width="1.2" height="1.2" fill="#111" opacity="0.8" transform="rotate(281 23.9 8.7)"/><rect x="9.8" y="33.5" width="1.0" height="1.0" fill="#111" opacity="0.5" transform="rotate(134 9.8 33.5)"/><rect x="21.7" y="34.1" width="1.0" height="1.0" fill="#111" opacity="0.8" transform="rotate(89 21.7 34.1)"/><rect x="33.0" y="11.2" width="1.2" height="1.2" fill="#111" opacity="1" transform="rotate(318 33.0 11.2)"/><rect x="6.5" y="33.0" width="1.0" height="1.0" fill="#111" opacity="1" transform="rotate(143 6.5 33.0)"/><rect x="10.7" y="6.0" width="0.8" height="0.8" fill="#111" opacity="1" transform="rotate(235 10.7 6.0)"/><rect x="4.3" y="24.3" width="1.5" height="1.5" fill="#111" opacity="0.8" transform="rotate(171 4.3 24.3)"/><rect x="34.1" y="24.8" width="0.8" height="0.8" fill="#111" opacity="1" transform="rotate(15 34.1 24.8)"/><rect x="28.5" y="38.9" width="1.0" height="1.0" fill="#111" opacity="1" transform="rotate(68 28.5 38.9)"/><rect x="9.1" y="34.3" width="1.5" height="1.5" fill="#111" opacity="0.8" transform="rotate(134 9.1 34.3)"/><rect x="24.0" y="5.5" width="0.8" height="0.8" fill="#111" opacity="1" transform="rotate(279 24.0 5.5)"/><rect x="10.8" y="8.9" width="1.2" height="1.2" fill="#111" opacity="1" transform="rotate(229 10.8 8.9)"/><rect x="34.5" y="24.6" width="0.8" height="0.8" fill="#111" opacity="1" transform="rotate(13 34.5 24.6)"/><rect x="32.3" y="21.5" width="1.0" height="1.0" fill="#111" opacity="1" transform="rotate(360 32.3 21.5)"/><rect x="27.4" y="8.8" width="1.2" height="1.2" fill="#111" opacity="1" transform="rotate(295 27.4 8.8)"/><rect x="13.4" y="13.8" width="0.8" height="0.8" fill="#111" opacity="0.5" transform="rotate(224 13.4 13.8)"/><rect x="11.0" y="18.2" width="0.8" height="0.8" fill="#111" opacity="0.5" transform="rotate(197 11.0 18.2)"/><rect x="15.4" y="11.4" width="0.8" height="0.8" fill="#111" opacity="1" transform="rotate(239 15.4 11.4)"/><rect x="11.2" y="29.2" width="1.2" height="1.2" fill="#111" opacity="0.8" transform="rotate(143 11.2 29.2)"/><rect x="12.0" y="26.9" width="1.2" height="1.2" fill="#111" opacity="0.5" transform="rotate(150 12.0 26.9)"/><rect x="6.1" y="30.4" width="1.2" height="1.2" fill="#111" opacity="1" transform="rotate(150 6.1 30.4)"/><rect x="10.7" y="30.3" width="0.8" height="0.8" fill="#111" opacity="0.5" transform="rotate(141 10.7 30.3)"/><rect x="33.0" y="13.3" width="0.8" height="0.8" fill="#111" opacity="0.5" transform="rotate(325 33.0 13.3)"/><rect x="9.5" y="15.1" width="1.0" height="1.0" fill="#111" opacity="1" transform="rotate(208 9.5 15.1)"/><rect x="36.6" y="22.9" width="1.5" height="1.5" fill="#111" opacity="1" transform="rotate(5 36.6 22.9)"/><rect x="5.0" y="13.4" width="1.0" height="1.0" fill="#111" opacity="1" transform="rotate(206 5.0 13.4)"/><rect x="14.6" y="31.2" width="1.0" height="1.0" fill="#111" opacity="1" transform="rotate(125 14.6 31.2)"/><rect x="32.9" y="30.8" width="1.0" height="1.0" fill="#111" opacity="0.8" transform="rotate(39 32.9 30.8)"/><rect x="34.5" y="34.7" width="1.5" height="1.5" fill="#111" opacity="0.8" transform="rotate(46 34.5 34.7)"/><rect x="38.8" y="27.5" width="1.5" height="1.5" fill="#111" opacity="1" transform="rotate(19 38.8 27.5)"/><rect x="34.5" y="12.6" width="1.0" height="1.0" fill="#111" opacity="1" transform="rotate(326 34.5 12.6)"/><rect x="10.1" y="10.7" width="1.0" height="1.0" fill="#111" opacity="0.5" transform="rotate(224 10.1 10.7)"/><rect x="26.6" y="32.8" width="1.5" height="1.5" fill="#111" opacity="1" transform="rotate(66 26.6 32.8)"/><rect x="12.9" y="29.2" width="1.0" height="1.0" fill="#111" opacity="1" transform="rotate(138 12.9 29.2)"/><rect x="36.3" y="25.4" width="0.8" height="0.8" fill="#111" opacity="0.8" transform="rotate(15 36.3 25.4)"/><rect x="33.0" y="32.0" width="1.2" height="1.2" fill="#111" opacity="0.5" transform="rotate(42 33.0 32.0)"/><rect x="17.0" y="33.3" width="1.5" height="1.5" fill="#111" opacity="0.8" transform="rotate(111 17.0 33.3)"/><rect x="8.1" y="26.2" width="0.8" height="0.8" fill="#111" opacity="1" transform="rotate(161 8.1 26.2)"/><rect x="10.7" y="11.5" width="1.0" height="1.0" fill="#111" opacity="0.5" transform="rotate(223 10.7 11.5)"/><rect x="23.0" y="4.4" width="1.5" height="1.5" fill="#111" opacity="1" transform="rotate(275 23.0 4.4)"/><rect x="26.7" y="8.6" width="0.8" height="0.8" fill="#111" opacity="1" transform="rotate(292 26.7 8.6)"/><rect x="12.9" y="32.1" width="1.5" height="1.5" fill="#111" opacity="1" transform="rotate(129 12.9 32.1)"/><rect x="32.7" y="24.4" width="1.2" height="1.2" fill="#111" opacity="1" transform="rotate(15 32.7 24.4)"/><rect x="35.4" y="26.4" width="1.5" height="1.5" fill="#111" opacity="1" transform="rotate(20 35.4 26.4)"/><rect x="32.4" y="23.3" width="0.8" height="0.8" fill="#111" opacity="1" transform="rotate(9 32.4 23.3)"/><rect x="33.7" y="34.8" width="1.2" height="1.2" fill="#111" opacity="1" transform="rotate(47 33.7 34.8)"/><rect x="15.0" y="6.2" width="1.0" height="1.0" fill="#111" opacity="1" transform="rotate(247 15.0 6.2)"/><rect x="29.3" y="7.9" width="1.2" height="1.2" fill="#111" opacity="1" transform="rotate(300 29.3 7.9)"/><circle cx="21.5" cy="21.7" r="9.3" fill="#0a92f2"/><text x="21.5" y="24.8" text-anchor="middle" font-size="8.5" font-weight="bold" font-style="italic" fill="#fff" font-family="Liberation Sans">VOL</text><circle cx="33.8" cy="33.8" r="3.8" fill="#1fb85a"/></svg>
<div class="a" style="left:1755px;top:19px;font-size:16.5px;line-height:20px;color:#fff;font-weight:bold">超级管理员</div>
<svg class="a" style="left:1843px;top:23px" width="15" height="10" viewBox="0 0 15 10" fill="none" stroke="#fff" stroke-width="2"><path d="M1.5 1.5l6 6 6-6"/></svg>
<div class="a" style="left:1755px;top:39px;font-size:15.2px;line-height:20px;color:#fff">2025-03-25 22:19:08</div>
</div>
<div class="a" style="left:0;top:75px;width:250px;height:1004px;background:#fff"></div>
<div class="a" style="left:13px;top:90px;width:224px;height:40px;border:1px solid #dcdfe6;border-radius:20px"></div>
<svg class="a" style="left:28px;top:101px" width="17" height="17" viewBox="0 0 17 17" fill="none" stroke="#a8abb2" stroke-width="1.5"><circle cx="7.5" cy="7.5" r="6"/><path d="M12 12l3.5 3.5"/></svg>
<div class="a" style="left:52px;top:101px;font-size:18px;line-height:20px;color:#a8abb2">搜索...</div>
<div class="a" style="left:0;top:133px;width:250px;height:70px;background:#ecf6fe"></div>
<div class="a" style="left:0;top:203px;width:250px;height:104px;background:#f5fbff"></div>
<div class="a" style="left:26.5px;top:156px;line-height:0"><svg width="21" height="21" viewBox="0 0 21 21" fill="none" stroke="#1a1a1a" stroke-width="1.35"><rect x="1" y="3" width="19" height="17" rx="1"/><path d="M1 7.5h19M6 1v3.5M15 1v3.5"/><path d="M5.5 11h2M9.5 11h2M13.5 11h2M5.5 15h2M9.5 15h2M13.5 15h2" stroke-width="1.3"/></svg></div>
<div class="mt" style="left:55px;top:159px">审批流程</div>
<svg class="a" style="left:211px;top:163px" width="13" height="8" viewBox="0 0 13 8" fill="none" stroke="#222" stroke-width="1.2"><path d="M1 7l5.5-5.5L12 7"/></svg>
<div class="a" style="left:26.5px;top:331px;line-height:0"><svg width="21" height="18" viewBox="0 0 21 18" fill="none" stroke="#1a1a1a" stroke-width="1.35"><path d="M1 9l3-8h13l3 8v8H1z"/><path d="M1 9h6v3h7V9h6M6 5h9"/></svg></div>
<div class="mt" style="left:55px;top:334px">基础设置</div>
<svg class="a" style="left:211px;top:338px" width="13" height="8" viewBox="0 0 13 8" fill="none" stroke="#222" stroke-width="1.2"><path d="M1 1l5.5 5.5L12 1"/></svg>
<div class="a" style="left:26.5px;top:401px;line-height:0"><svg width="20" height="20" viewBox="0 0 20 20" fill="none" stroke="#1a1a1a" stroke-width="1.35"><path d="M1.5 19V7.5L10 1l8.5 6.5V19z"/></svg></div>
<div class="mt" style="left:55px;top:404px">仓库管理</div>
<svg class="a" style="left:211px;top:408px" width="13" height="8" viewBox="0 0 13 8" fill="none" stroke="#222" stroke-width="1.2"><path d="M1 1l5.5 5.5L12 1"/></svg>
<div class="a" style="left:26.5px;top:471px;line-height:0"><svg width="20" height="20" viewBox="0 0 20 20" fill="none" stroke="#1a1a1a" stroke-width="1.35"><path d="M11 2H3a2 2 0 0 0-2 2v13a2 2 0 0 0 2 2h13a2 2 0 0 0 2-2V9"/><circle cx="16" cy="3.5" r="2.8"/></svg></div>
<div class="mt" style="left:55px;top:474px">设备管理</div>
<svg class="a" style="left:211px;top:478px" width="13" height="8" viewBox="0 0 13 8" fill="none" stroke="#222" stroke-width="1.2"><path d="M1 1l5.5 5.5L12 1"/></svg>
<div class="a" style="left:26.5px;top:541px;line-height:0"><svg width="18" height="21" viewBox="0 0 18 21" fill="none" stroke="#1a1a1a" stroke-width="1.35"><rect x="2" y="1" width="14" height="19" rx="1.5"/><path d="M2 15.5h14"/><circle cx="9" cy="18" r=".5" fill="#1a1a1a"/></svg></div>
<div class="mt" style="left:55px;top:544px">工序管理</div>
<svg class="a" style="left:211px;top:548px" width="13" height="8" viewBox="0 0 13 8" fill="none" stroke="#222" stroke-width="1.2"><path d="M1 1l5.5 5.5L12 1"/></svg>
<div class="a" style="left:26.5px;top:611px;line-height:0"><svg width="21" height="20" viewBox="0 0 21 20" fill="none" stroke="#1a1a1a" stroke-width="1.35"><path d="M1 1.5h3v12h14l2-11H4"/><circle cx="6" cy="18" r=".6" fill="#1a1a1a"/><circle cx="16" cy="18" r=".6" fill="#1a1a1a"/></svg></div>
<div class="mt" style="left:55px;top:614px">生产计划</div>
<svg class="a" style="left:211px;top:618px" width="13" height="8" viewBox="0 0 13 8" fill="none" stroke="#222" stroke-width="1.2"><path d="M1 1l5.5 5.5L12 1"/></svg>
<div class="a" style="left:26.5px;top:681px;line-height:0"><svg width="22" height="22" viewBox="0 0 22 22" fill="none" stroke="#1a1a1a" stroke-width="1.35"><path d="M11 1.2l2.2 1.9 2.9-.5 1 2.8 2.7 1.1-.5 2.9L21 11.3l-1.9 2.2.5 2.9-2.8 1-1.1 2.7-2.9-.5-2.2 1.9-2.2-1.9-2.9.5-1-2.8-2.7-1.1.5-2.9L1 11l1.9-2.2-.5-2.9 2.8-1 1.1-2.7 2.9.5z"/><circle cx="11" cy="11" r="4"/></svg></div>
<div class="mt" style="left:55px;top:684px">制造BOM</div>
<svg class="a" style="left:211px;top:688px" width="13" height="8" viewBox="0 0 13 8" fill="none" stroke="#222" stroke-width="1.2"><path d="M1 1l5.5 5.5L12 1"/></svg>
<div class="a" style="left:26.5px;top:751px;line-height:0"><svg width="18" height="21" viewBox="0 0 18 21" fill="none" stroke="#1a1a1a" stroke-width="1.35"><rect x="1.5" y="1" width="15" height="19" rx="1"/><path d="M5 6h5M5 10h8M5 14h8"/></svg></div>
<div class="mt" style="left:55px;top:754px">生产报工</div>
<svg class="a" style="left:211px;top:758px" width="13" height="8" viewBox="0 0 13 8" fill="none" stroke="#222" stroke-width="1.2"><path d="M1 1l5.5 5.5L12 1"/></svg>
<div class="a" style="left:26.5px;top:821px;line-height:0"><svg width="20" height="20" viewBox="0 0 20 20" fill="none" stroke="#1a1a1a" stroke-width="1.35"><path d="M9 2H1.5v17h17v-8"/><path d="M16.5 1.5l2 2-8 8-2.8.8.8-2.8z"/></svg></div>
<div class="mt" style="left:55px;top:824px">质检中心</div>
<svg class="a" style="left:211px;top:828px" width="13" height="8" viewBox="0 0 13 8" fill="none" stroke="#222" stroke-width="1.2"><path d="M1 1l5.5 5.5L12 1"/></svg>
<div class="a" style="left:26.5px;top:891px;line-height:0"><svg width="21" height="21" viewBox="0 0 21 21" fill="none" stroke="#1a1a1a" stroke-width="1.35"><circle cx="10.5" cy="10.5" r="9.5"/><path d="M13.5 5.5l-4.2 7.2 2 1z" fill="#1a1a1a"/></svg></div>
<div class="mt" style="left:55px;top:894px">生产排班</div>
<svg class="a" style="left:211px;top:898px" width="13" height="8" viewBox="0 0 13 8" fill="none" stroke="#222" stroke-width="1.2"><path d="M1 1l5.5 5.5L12 1"/></svg>
<div class="a" style="left:26.5px;top:961px;line-height:0"><svg width="21" height="20" viewBox="0 0 21 20" fill="none" stroke="#1a1a1a" stroke-width="1.35"><path d="M1 1.5h19M2.5 1.5v12h16v-12M6 19l2-5.5M15 19l-2-5.5M5 10l4-4 3 3 4-4"/></svg></div>
<div class="mt" style="left:55px;top:964px">统计报表</div>
<svg class="a" style="left:211px;top:968px" width="13" height="8" viewBox="0 0 13 8" fill="none" stroke="#222" stroke-width="1.2"><path d="M1 1l5.5 5.5L12 1"/></svg>
<div class="mt" style="left:50px;top:220px">我的审批</div>
<div class="mt" style="left:50px;top:272px">流程配置</div>
<div class="a" style="left:250px;top:75px;width:1670px;height:45px;background:#fff"></div>
<div class="a" style="left:250px;top:119px;width:1670px;height:1px;background:#f1f2f4"></div>
<div class="a" style="left:250px;top:76px;width:81px;height:44px;background:#fff;border:1px solid #dedede;border-radius:4px 4px 0 0"></div>
<div class="a" style="left:270px;top:88.5px;font-size:18px;line-height:20px;color:#111">首页</div>
<div class="a" style="left:250px;top:120px;width:1px;height:959px;background:#e6e6e6"></div>
<div class="a" style="left:270px;top:136px;width:1175px;height:42px;background:#f5fbff;border:1px solid #d9efff;border-radius:4px"></div>
<div class="a" style="left:291px;top:146.5px;font-size:16.4px;letter-spacing:.15px;line-height:20px;color:#1e90ff">框架前端及文档重构版本发布,兼容原有版本代码及jsx写法,放开自定义扩展组件限制,新版可任意选择vue2/3/typescript语法开发方式</div>
<div class="card" style="left:270px;top:190px;width:280px;height:113px"></div>
<div class="lbl" style="left:289px;top:219.5px">本月入库数量</div>
<div class="val" style="left:288px;top:247px">2,200</div>
<div class="ib" style="left:471px;top:227px;background:#fbd9fe"></div>
<svg class="a" style="left:471px;top:227px" width="50" height="50" viewBox="0 0 50 50"><path d="M16.4 19.5Q19 13 22.6 12.5L35.5 19.5z" fill="#ee90f5"/><rect x="13.5" y="19.3" width="24" height="18.5" rx="2" fill="#c561d6"/><path d="M21.5 21.5l3.3 5.5 3.3-5.5M24.8 27v6M22 28.3h5.6M22 30.8h5.6" stroke="#f8d8fb" stroke-width="1.3" fill="none"/><path d="M15.5 35.2h9.5M26 35.2h1.5" stroke="#fff" stroke-width="1"/></svg>
<div class="card" style="left:568px;top:190px;width:280px;height:113px"></div>
<div class="lbl" style="left:587px;top:219.5px">本月出库数量</div>
<div class="val" style="left:586px;top:247px">1,400</div>
<div class="ib" style="left:769px;top:227px;background:#e1effe"></div>
<svg class="a" style="left:769px;top:227px" width="50" height="50" viewBox="0 0 50 50"><path d="M10.5 17.5L32.3 12.3Q36.5 12 37.5 17.5z" fill="#6aaeff"/><rect x="9.9" y="19" width="28.9" height="18.6" rx="2" fill="#0f7bff"/><circle cx="19" cy="26.4" r="3.5" fill="none" stroke="#e8f2ff" stroke-width="1.2"/><path d="M21.5 29l2.4 2.6" stroke="#e8f2ff" stroke-width="1.3"/><path d="M38.8 25.3h-7.4a2.1 2.1 0 0 0 0 4.3h7.4" fill="#fff" stroke="#fff" stroke-width=".8"/><rect x="31.5" y="26.3" width="7" height="2.3" rx="1" fill="#7fb8ff"/></svg>
<div class="card" style="left:867px;top:190px;width:280px;height:113px"></div>
<div class="lbl" style="left:886px;top:219.5px">累计入库数量</div>
<div class="val" style="left:885px;top:247px">28,000</div>
<div class="ib" style="left:1068px;top:227px;background:#d8f3ec"></div>
<svg class="a" style="left:1068px;top:227px" width="50" height="50" viewBox="0 0 50 50"><rect x="13.8" y="12.1" width="22.4" height="25.7" rx="2.5" fill="none" stroke="#3dd1b0" stroke-width="1.3"/><rect x="13.8" y="12.1" width="20.4" height="22.8" rx="2.5" fill="#05c3a2"/><path d="M18 14.2h9.5" stroke="#fff" stroke-width="1.1"/><path d="M12 17.3h4.5M12 23.5h4.5M12 30h4.5" stroke="#8fe8cf" stroke-width="1.6"/><path d="M22.5 19.5l6 12" stroke="#8fe8cf" stroke-width="2"/></svg>
<div class="card" style="left:1165px;top:190px;width:280px;height:113px"></div>
<div class="lbl" style="left:1184px;top:219.5px">累计出库数量</div>
<div class="val" style="left:1183px;top:247px">14,000</div>
<div class="ib" style="left:1366px;top:227px;background:#ffe9ea"></div>
<svg class="a" style="left:1366px;top:227px" width="50" height="50" viewBox="0 0 50 50"><rect x="13.8" y="12.1" width="22.4" height="25.4" rx="1.5" fill="#ff4d6a"/><path d="M19.2 12.1v21.5a1.6 1.6 0 0 0 3.2 0V12.1" fill="#ff6f86" stroke="#fff" stroke-width=".9"/><path d="M23.9 16.8h9.7M23.9 21.7h6M23.9 26.7h6" stroke="#ffd2d9" stroke-width="1.3"/><path d="M22.9 35.5h9.4M33.5 35.5h1.3" stroke="#fff" stroke-width="1"/></svg>
<div class="card" style="left:270px;top:321px;width:1175px;height:351px"></div>
<div class="a" style="left:295px;top:343px;font-size:20px;line-height:22px;font-weight:bold;color:#444">出入库数量</div>
<div class="bg" style="left:1168px;top:337px;height:30px"><div style="width:59px;line-height:28px;background:#409eff;color:#fff;border-color:#409eff">本月</div><div style="width:58px;line-height:28px">上月</div><div style="width:73px;line-height:28px">近三月</div><div style="width:74px;line-height:28px">近半年</div></div>
<svg class="a" style="left:0;top:0" width="1920" height="1079">
<rect x="365.00" y="541.2" width="33.7" height="87.4" fill="#5470c6"/>
<rect x="405.00" y="575.8" width="33.7" height="52.8" fill="#2196f3"/>
<rect x="466.27" y="426.2" width="33.7" height="202.4" fill="#5470c6"/>
<rect x="506.27" y="507.8" width="33.7" height="120.8" fill="#2196f3"/>
<rect x="567.54" y="507.8" width="33.7" height="120.8" fill="#5470c6"/>
<rect x="607.54" y="419.5" width="33.7" height="209.1" fill="#2196f3"/>
<rect x="668.81" y="443.8" width="33.7" height="184.8" fill="#5470c6"/>
<rect x="708.81" y="554.5" width="33.7" height="74.1" fill="#2196f3"/>
<rect x="770.08" y="622.2" width="33.7" height="6.4" fill="#5470c6"/>
<rect x="810.08" y="416.8" width="33.7" height="211.8" fill="#2196f3"/>
<rect x="871.35" y="479.2" width="33.7" height="149.4" fill="#5470c6"/>
<rect x="911.35" y="504.2" width="33.7" height="124.4" fill="#2196f3"/>
<rect x="972.62" y="522.5" width="33.7" height="106.1" fill="#5470c6"/>
<rect x="1012.62" y="572.2" width="33.7" height="56.4" fill="#2196f3"/>
<rect x="1073.89" y="537.2" width="33.7" height="91.4" fill="#5470c6"/>
<rect x="1113.89" y="483.8" width="33.7" height="144.8" fill="#2196f3"/>
<rect x="1175.16" y="501.8" width="33.7" height="126.8" fill="#5470c6"/>
<rect x="1215.16" y="602.5" width="33.7" height="26.1" fill="#2196f3"/>
<rect x="1276.43" y="595.8" width="33.7" height="32.8" fill="#5470c6"/>
<rect x="1316.43" y="545.8" width="33.7" height="82.8" fill="#2196f3"/>
</svg>
<div class="a" style="left:242px;width:100px;text-align:right;top:380px;font-size:16px;line-height:20px;color:#6e7079">900</div>
<div class="a" style="left:242px;width:100px;text-align:right;top:459px;font-size:16px;line-height:20px;color:#6e7079">600</div>
<div class="a" style="left:242px;width:100px;text-align:right;top:538px;font-size:16px;line-height:20px;color:#6e7079">300</div>
<div class="a" style="left:242px;width:100px;text-align:right;top:617px;font-size:16px;line-height:20px;color:#6e7079">0</div>
<div class="a" style="left:341.9px;width:120px;text-align:center;top:635px;font-size:16px;line-height:20px;color:#6e7079">2025-03-25</div>
<div class="a" style="left:544.4px;width:120px;text-align:center;top:635px;font-size:16px;line-height:20px;color:#6e7079">2025-03-23</div>
<div class="a" style="left:746.9px;width:120px;text-align:center;top:635px;font-size:16px;line-height:20px;color:#6e7079">2025-03-21</div>
<div class="a" style="left:949.5px;width:120px;text-align:center;top:635px;font-size:16px;line-height:20px;color:#6e7079">2025-03-19</div>
<div class="a" style="left:1152.0px;width:120px;text-align:center;top:635px;font-size:16px;line-height:20px;color:#6e7079">2025-03-17</div>
<div class="card" style="left:270px;top:687px;width:1175px;height:420px"></div>
<div class="a" style="left:288px;top:708px;font-size:18px;line-height:20px;font-weight:bold;color:#111">部门支出记录</div>
<div class="bg" style="left:1161px;top:707px;height:29px"><div style="width:59px;line-height:27px">本月</div><div style="width:58px;line-height:27px">上月</div><div style="width:74px;line-height:27px">近三月</div><div style="width:73px;line-height:27px">近半年</div></div>
<div class="a" style="left:291px;top:787px;width:30px;height:1px;background:#ebeef5"></div>
<div class="th" style="left:295px;top:757px">#</div>
<div class="a" style="left:323px;top:787px;width:125px;height:1px;background:#ebeef5"></div>
<div class="th" style="left:326.5px;top:757px">部门</div>
<div class="a" style="left:450px;top:787px;width:125px;height:1px;background:#ebeef5"></div>
<div class="th" style="left:453.5px;top:757px">日期</div>
<div class="a" style="left:577px;top:787px;width:147px;height:1px;background:#ebeef5"></div>
<div class="th" style="left:580.5px;top:757px">收入</div>
<div class="a" style="left:726px;top:787px;width:147px;height:1px;background:#ebeef5"></div>
<div class="th" style="left:729.5px;top:757px">支出</div>
<div class="a" style="left:875px;top:787px;width:148px;height:1px;background:#ebeef5"></div>
<div class="th" style="left:878.5px;top:757px">消费</div>
<div class="a" style="left:1025px;top:787px;width:147px;height:1px;background:#ebeef5"></div>
<div class="th" style="left:1028.5px;top:757px">结余</div>
<div class="a" style="left:1174px;top:787px;width:250px;height:1px;background:#ebeef5"></div>
<div class="th" style="left:1177.5px;top:757px">备注</div>
<div class="a" style="left:291px;top:833.5px;width:30px;height:1px;background:#ebeef5"></div>
<div class="a" style="left:323px;top:833.5px;width:125px;height:1px;background:#ebeef5"></div>
<div class="a" style="left:450px;top:833.5px;width:125px;height:1px;background:#ebeef5"></div>
<div class="a" style="left:577px;top:833.5px;width:147px;height:1px;background:#ebeef5"></div>
<div class="a" style="left:726px;top:833.5px;width:147px;height:1px;background:#ebeef5"></div>
<div class="a" style="left:875px;top:833.5px;width:148px;height:1px;background:#ebeef5"></div>
<div class="a" style="left:1025px;top:833.5px;width:147px;height:1px;background:#ebeef5"></div>
<div class="a" style="left:1174px;top:833.5px;width:250px;height:1px;background:#ebeef5"></div>
<div class="td" style="left:294.5px;top:803.8px">1.</div>
<div class="td" style="left:326.5px;top:803.8px;letter-spacing:.25px">公共事业部</div>
<div class="td" style="left:453.5px;top:803.8px">2025-03-25</div>
<div class="td" style="left:580.5px;top:803.8px">9,600</div>
<div class="td" style="left:729.5px;top:803.8px">4,300</div>
<div class="td" style="left:878.5px;top:803.8px">2,300</div>
<div class="td" style="left:1028.5px;top:803.8px">8,400</div>
<div class="td" style="left:1177.5px;top:803.8px;letter-spacing:.25px">这家伙很懒,没有说明信息...</div>
<div class="a" style="left:291px;top:836.5px;width:30px;height:44.5px;background:#f3faff"></div>
<div class="a" style="left:291px;top:880.0px;width:30px;height:1px;background:#ebeef5"></div>
<div class="a" style="left:323px;top:836.5px;width:125px;height:44.5px;background:#f3faff"></div>
<div class="a" style="left:323px;top:880.0px;width:125px;height:1px;background:#ebeef5"></div>
<div class="a" style="left:450px;top:836.5px;width:125px;height:44.5px;background:#f3faff"></div>
<div class="a" style="left:450px;top:880.0px;width:125px;height:1px;background:#ebeef5"></div>
<div class="a" style="left:577px;top:836.5px;width:147px;height:44.5px;background:#f3faff"></div>
<div class="a" style="left:577px;top:880.0px;width:147px;height:1px;background:#ebeef5"></div>
<div class="a" style="left:726px;top:836.5px;width:147px;height:44.5px;background:#f3faff"></div>
<div class="a" style="left:726px;top:880.0px;width:147px;height:1px;background:#ebeef5"></div>
<div class="a" style="left:875px;top:836.5px;width:148px;height:44.5px;background:#f3faff"></div>
<div class="a" style="left:875px;top:880.0px;width:148px;height:1px;background:#ebeef5"></div>
<div class="a" style="left:1025px;top:836.5px;width:147px;height:44.5px;background:#f3faff"></div>
<div class="a" style="left:1025px;top:880.0px;width:147px;height:1px;background:#ebeef5"></div>
<div class="a" style="left:1174px;top:836.5px;width:250px;height:44.5px;background:#f3faff"></div>
<div class="a" style="left:1174px;top:880.0px;width:250px;height:1px;background:#ebeef5"></div>
<div class="td" style="left:294.5px;top:850.2px">2.</div>
<div class="td" style="left:326.5px;top:850.2px;letter-spacing:.25px">公共事业部</div>
<div class="td" style="left:453.5px;top:850.2px">2025-03-24</div>
<div class="td" style="left:580.5px;top:850.2px">6,300</div>
<div class="td" style="left:729.5px;top:850.2px">8,900</div>
<div class="td" style="left:878.5px;top:850.2px">7,300</div>
<div class="td" style="left:1028.5px;top:850.2px">4,100</div>
<div class="td" style="left:1177.5px;top:850.2px;letter-spacing:.25px">这家伙很懒,没有说明信息...</div>
<div class="a" style="left:291px;top:926.5px;width:30px;height:1px;background:#ebeef5"></div>
<div class="a" style="left:323px;top:926.5px;width:125px;height:1px;background:#ebeef5"></div>
<div class="a" style="left:450px;top:926.5px;width:125px;height:1px;background:#ebeef5"></div>
<div class="a" style="left:577px;top:926.5px;width:147px;height:1px;background:#ebeef5"></div>
<div class="a" style="left:726px;top:926.5px;width:147px;height:1px;background:#ebeef5"></div>
<div class="a" style="left:875px;top:926.5px;width:148px;height:1px;background:#ebeef5"></div>
<div class="a" style="left:1025px;top:926.5px;width:147px;height:1px;background:#ebeef5"></div>
<div class="a" style="left:1174px;top:926.5px;width:250px;height:1px;background:#ebeef5"></div>
<div class="td" style="left:294.5px;top:896.8px">3.</div>
<div class="td" style="left:326.5px;top:896.8px;letter-spacing:.25px">公共事业部</div>
<div class="td" style="left:453.5px;top:896.8px">2025-03-23</div>
<div class="td" style="left:580.5px;top:896.8px">2,300</div>
<div class="td" style="left:729.5px;top:896.8px">2,400</div>
<div class="td" style="left:878.5px;top:896.8px">2,300</div>
<div class="td" style="left:1028.5px;top:896.8px">2,200</div>
<div class="td" style="left:1177.5px;top:896.8px;letter-spacing:.25px">这家伙很懒,没有说明信息...</div>
<div class="a" style="left:291px;top:929.5px;width:30px;height:44.5px;background:#f3faff"></div>
<div class="a" style="left:291px;top:973.0px;width:30px;height:1px;background:#ebeef5"></div>
<div class="a" style="left:323px;top:929.5px;width:125px;height:44.5px;background:#f3faff"></div>
<div class="a" style="left:323px;top:973.0px;width:125px;height:1px;background:#ebeef5"></div>
<div class="a" style="left:450px;top:929.5px;width:125px;height:44.5px;background:#f3faff"></div>
<div class="a" style="left:450px;top:973.0px;width:125px;height:1px;background:#ebeef5"></div>
<div class="a" style="left:577px;top:929.5px;width:147px;height:44.5px;background:#f3faff"></div>
<div class="a" style="left:577px;top:973.0px;width:147px;height:1px;background:#ebeef5"></div>
<div class="a" style="left:726px;top:929.5px;width:147px;height:44.5px;background:#f3faff"></div>
<div class="a" style="left:726px;top:973.0px;width:147px;height:1px;background:#ebeef5"></div>
<div class="a" style="left:875px;top:929.5px;width:148px;height:44.5px;background:#f3faff"></div>
<div class="a" style="left:875px;top:973.0px;width:148px;height:1px;background:#ebeef5"></div>
<div class="a" style="left:1025px;top:929.5px;width:147px;height:44.5px;background:#f3faff"></div>
<div class="a" style="left:1025px;top:973.0px;width:147px;height:1px;background:#ebeef5"></div>
<div class="a" style="left:1174px;top:929.5px;width:250px;height:44.5px;background:#f3faff"></div>
<div class="a" style="left:1174px;top:973.0px;width:250px;height:1px;background:#ebeef5"></div>
<div class="td" style="left:294.5px;top:943.2px">4.</div>
<div class="td" style="left:326.5px;top:943.2px;letter-spacing:.25px">公共事业部</div>
<div class="td" style="left:453.5px;top:943.2px">2025-03-22</div>
<div class="td" style="left:580.5px;top:943.2px">6,700</div>
<div class="td" style="left:729.5px;top:943.2px">6,000</div>
<div class="td" style="left:878.5px;top:943.2px">7,300</div>
<div class="td" style="left:1028.5px;top:943.2px">9,900</div>
<div class="td" style="left:1177.5px;top:943.2px;letter-spacing:.25px">这家伙很懒,没有说明信息...</div>
<div class="a" style="left:291px;top:1019.5px;width:30px;height:1px;background:#ebeef5"></div>
<div class="a" style="left:323px;top:1019.5px;width:125px;height:1px;background:#ebeef5"></div>
<div class="a" style="left:450px;top:1019.5px;width:125px;height:1px;background:#ebeef5"></div>
<div class="a" style="left:577px;top:1019.5px;width:147px;height:1px;background:#ebeef5"></div>
<div class="a" style="left:726px;top:1019.5px;width:147px;height:1px;background:#ebeef5"></div>
<div class="a" style="left:875px;top:1019.5px;width:148px;height:1px;background:#ebeef5"></div>
<div class="a" style="left:1025px;top:1019.5px;width:147px;height:1px;background:#ebeef5"></div>
<div class="a" style="left:1174px;top:1019.5px;width:250px;height:1px;background:#ebeef5"></div>
<div class="td" style="left:294.5px;top:989.8px">5.</div>
<div class="td" style="left:326.5px;top:989.8px;letter-spacing:.25px">公共事业部</div>
<div class="td" style="left:453.5px;top:989.8px">2025-03-21</div>
<div class="td" style="left:580.5px;top:989.8px">1,300</div>
<div class="td" style="left:729.5px;top:989.8px">6,000</div>
<div class="td" style="left:878.5px;top:989.8px">4,000</div>
<div class="td" style="left:1028.5px;top:989.8px">4,100</div>
<div class="td" style="left:1177.5px;top:989.8px;letter-spacing:.25px">这家伙很懒,没有说明信息...</div>
<div class="a" style="left:291px;top:1022.5px;width:30px;height:44.5px;background:#f3faff"></div>
<div class="a" style="left:291px;top:1066.0px;width:30px;height:1px;background:#ebeef5"></div>
<div class="a" style="left:323px;top:1022.5px;width:125px;height:44.5px;background:#f3faff"></div>
<div class="a" style="left:323px;top:1066.0px;width:125px;height:1px;background:#ebeef5"></div>
<div class="a" style="left:450px;top:1022.5px;width:125px;height:44.5px;background:#f3faff"></div>
<div class="a" style="left:450px;top:1066.0px;width:125px;height:1px;background:#ebeef5"></div>
<div class="a" style="left:577px;top:1022.5px;width:147px;height:44.5px;background:#f3faff"></div>
<div class="a" style="left:577px;top:1066.0px;width:147px;height:1px;background:#ebeef5"></div>
<div class="a" style="left:726px;top:1022.5px;width:147px;height:44.5px;background:#f3faff"></div>
<div class="a" style="left:726px;top:1066.0px;width:147px;height:1px;background:#ebeef5"></div>
<div class="a" style="left:875px;top:1022.5px;width:148px;height:44.5px;background:#f3faff"></div>
<div class="a" style="left:875px;top:1066.0px;width:148px;height:1px;background:#ebeef5"></div>
<div class="a" style="left:1025px;top:1022.5px;width:147px;height:44.5px;background:#f3faff"></div>
<div class="a" style="left:1025px;top:1066.0px;width:147px;height:1px;background:#ebeef5"></div>
<div class="a" style="left:1174px;top:1022.5px;width:250px;height:44.5px;background:#f3faff"></div>
<div class="a" style="left:1174px;top:1066.0px;width:250px;height:1px;background:#ebeef5"></div>
<div class="td" style="left:294.5px;top:1036.2px">6.</div>
<div class="td" style="left:326.5px;top:1036.2px;letter-spacing:.25px">公共事业部</div>
<div class="td" style="left:453.5px;top:1036.2px">2025-03-20</div>
<div class="td" style="left:580.5px;top:1036.2px">1,100</div>
<div class="td" style="left:729.5px;top:1036.2px">9,600</div>
<div class="td" style="left:878.5px;top:1036.2px">7,200</div>
<div class="td" style="left:1028.5px;top:1036.2px">1,900</div>
<div class="td" style="left:1177.5px;top:1036.2px;letter-spacing:.25px">这家伙很懒,没有说明信息...</div>
<div class="card" style="left:1464px;top:136px;width:437px;height:960px;border-radius:0"></div>
<div class="a" style="left:1483px;top:158px;font-size:18px;line-height:20px;font-weight:bold;color:#111">生产数量统计</div>
<svg class="a" style="left:0;top:0" width="1920" height="1079">
<defs><clipPath id="pc"><rect x="1483" y="180" width="400" height="320"/></clipPath></defs><g clip-path="url(#pc)">
<path d="M1683.20 222.20A113 113 0 0 1 1794.16 313.83L1765.68 319.32A84 84 0 0 0 1683.20 251.20Z" fill="#7122fa" stroke="#7122fa" stroke-width=".3"/>
<path d="M1794.16 313.83A113 113 0 0 1 1764.76 413.41L1743.83 393.34A84 84 0 0 0 1765.68 319.32Z" fill="#2ec7c9" stroke="#2ec7c9" stroke-width=".3"/>
<path d="M1764.76 413.41A113 113 0 0 1 1702.04 446.62L1697.21 418.02A84 84 0 0 0 1743.83 393.34Z" fill="#c4a7fd" stroke="#c4a7fd" stroke-width=".3"/>
<path d="M1702.04 446.62A113 113 0 0 1 1658.93 445.56L1665.16 417.24A84 84 0 0 0 1697.21 418.02Z" fill="#00d1f5" stroke="#00d1f5" stroke-width=".3"/>
<path d="M1658.93 445.56A113 113 0 0 1 1572.79 359.27L1601.13 353.09A84 84 0 0 0 1665.16 417.24Z" fill="#ff6384" stroke="#ff6384" stroke-width=".3"/>
<path d="M1572.79 359.27A113 113 0 0 1 1572.59 312.09L1600.98 318.02A84 84 0 0 0 1601.13 353.09Z" fill="#3aa0e8" stroke="#3aa0e8" stroke-width=".3"/>
<path d="M1572.59 312.09A113 113 0 0 1 1627.90 236.66L1642.09 261.95A84 84 0 0 0 1600.98 318.02Z" fill="#ffcb57" stroke="#ffcb57" stroke-width=".3"/>
<path d="M1627.90 236.66A113 113 0 0 1 1683.20 222.20L1683.20 251.20A84 84 0 0 0 1642.09 261.95Z" fill="#4bbfbf" stroke="#4bbfbf" stroke-width=".3"/>
<polyline points="1654.7,224.5 1650,206 1631,206" fill="none" stroke="#4bbfbf" stroke-width="1"/>
<polyline points="1754,247 1765.6,233 1784.8,233" fill="none" stroke="#7122fa" stroke-width="1"/>
<polyline points="1592.9,267 1578,257 1558.7,257" fill="none" stroke="#ffcb57" stroke-width="1"/>
<polyline points="1571.5,335.3 1533,336" fill="none" stroke="#3aa0e8" stroke-width="1"/>
<polyline points="1791,366.5 1804,370.7 1827.4,370.7" fill="none" stroke="#2ec7c9" stroke-width="1"/>
<polyline points="1737.8,433.4 1744.2,449.2 1765.6,449.2" fill="none" stroke="#c4a7fd" stroke-width="1"/>
<polyline points="1681.6,447.5 1681.6,465.4 1662.4,465.4" fill="none" stroke="#00d1f5" stroke-width="1"/>
<polyline points="1604.4,414.2 1589.9,427 1572.4,427" fill="none" stroke="#ff6384" stroke-width="1"/>
</g></svg>
<div class="a" style="left:1483px;top:180px;width:400px;height:320px;overflow:hidden">
<div class="pl" style="left:83.0px;top:17.6px">已产数量</div>
<div class="pl" style="left:308.0px;top:43.0px">排产数量</div>
<div class="pl" style="left:9.6px;top:66.6px">待产数量</div>
<div class="pl" style="left:-15.0px;top:145.5px">调拨数量</div>
<div class="pl" style="left:350.8px;top:180.5px">计划数量</div>
<div class="pl" style="left:287.7px;top:259.4px">成品数量</div>
<div class="pl" style="left:114.0px;top:274.7px">报废数量</div>
<div class="pl" style="left:22.4px;top:237.2px">入库数量</div>
</div>
<div class="a" style="left:1650px;top:301px;width:80px;text-align:center;font-size:22px;line-height:26px;font-weight:bold;color:#444">合计</div>
<div class="a" style="left:1630px;top:334px;width:120px;text-align:center;font-size:32px;line-height:36px;font-weight:bold;color:#262626;letter-spacing:1px;text-indent:1px">3270</div>
<div class="a" style="left:1502.0px;top:510.8px;width:15px;height:15px;border-radius:8px;background:#7122fa"></div>
<div class="pl" style="left:1523.0px;top:509.3px">排产数量</div>
<div class="a" style="left:1595.8px;top:510.8px;width:15px;height:15px;border-radius:8px;background:#2ec7c9"></div>
<div class="pl" style="left:1616.8px;top:509.3px">计划数量</div>
<div class="a" style="left:1689.6px;top:510.8px;width:15px;height:15px;border-radius:8px;background:#c4a7fd"></div>
<div class="pl" style="left:1710.6px;top:509.3px">成品数量</div>
<div class="a" style="left:1783.4px;top:510.8px;width:15px;height:15px;border-radius:8px;background:#00d1f5"></div>
<div class="pl" style="left:1804.4px;top:509.3px">报废数量</div>
<div class="a" style="left:1502.0px;top:537.7px;width:15px;height:15px;border-radius:8px;background:#ff6384"></div>
<div class="pl" style="left:1523.0px;top:536.2px">入库数量</div>
<div class="a" style="left:1595.8px;top:537.7px;width:15px;height:15px;border-radius:8px;background:#3aa0e8"></div>
<div class="pl" style="left:1616.8px;top:536.2px">调拨数量</div>
<div class="a" style="left:1689.6px;top:537.7px;width:15px;height:15px;border-radius:8px;background:#ffcb57"></div>
<div class="pl" style="left:1710.6px;top:536.2px">待产数量</div>
<div class="a" style="left:1783.4px;top:537.7px;width:15px;height:15px;border-radius:8px;background:#4bbfbf"></div>
<div class="pl" style="left:1804.4px;top:536.2px">已产数量</div>
<div class="a" style="left:1482px;top:602px;font-size:18px;line-height:20px;font-weight:bold;color:#111">站内消息</div>
<div class="a" style="left:1485px;top:677.5px;width:60px;height:1px;background:#f0f2f5"></div>
<div class="a" style="left:1547px;top:677.5px;width:333px;height:1px;background:#f0f2f5"></div>
<div class="tag" style="left:1488px;top:641.0px">消息</div>
<div class="msg" style="left:1550px;top:645.0px">健身房突然倒闭，会员们的钱该如何追回?</div>
<div class="a" style="left:1485px;top:680.5px;width:60px;height:48.5px;background:#f3faff"></div>
<div class="a" style="left:1547px;top:680.5px;width:333px;height:48.5px;background:#f3faff"></div>
<div class="a" style="left:1485px;top:728.1px;width:60px;height:1px;background:#f0f2f5"></div>
<div class="a" style="left:1547px;top:728.1px;width:333px;height:1px;background:#f0f2f5"></div>
<div class="tag" style="left:1488px;top:691.5px">消息</div>
<div class="msg" style="left:1550px;top:695.5px">智能家电频繁死机，技术瓶颈待突破?</div>
<div class="a" style="left:1485px;top:778.6px;width:60px;height:1px;background:#f0f2f5"></div>
<div class="a" style="left:1547px;top:778.6px;width:333px;height:1px;background:#f0f2f5"></div>
<div class="tag" style="left:1488px;top:742.1px">消息</div>
<div class="msg" style="left:1550px;top:746.1px">热门综艺抄袭争议不断，原创之路在何方?</div>
<div class="a" style="left:1485px;top:781.6px;width:60px;height:48.5px;background:#f3faff"></div>
<div class="a" style="left:1547px;top:781.6px;width:333px;height:48.5px;background:#f3faff"></div>
<div class="a" style="left:1485px;top:829.2px;width:60px;height:1px;background:#f0f2f5"></div>
<div class="a" style="left:1547px;top:829.2px;width:333px;height:1px;background:#f0f2f5"></div>
<div class="tag" style="left:1488px;top:792.6px">消息</div>
<div class="msg" style="left:1550px;top:796.6px">宠物食品质量堪忧，毛孩子的健康谁守护?</div>
<div class="a" style="left:1485px;top:879.8px;width:60px;height:1px;background:#f0f2f5"></div>
<div class="a" style="left:1547px;top:879.8px;width:333px;height:1px;background:#f0f2f5"></div>
<div class="tag" style="left:1488px;top:843.2px">消息</div>
<div class="msg" style="left:1550px;top:847.2px">航空公司超售机票，乘客权益如何保障?</div>
<div class="a" style="left:1485px;top:882.8px;width:60px;height:48.5px;background:#f3faff"></div>
<div class="a" style="left:1547px;top:882.8px;width:333px;height:48.5px;background:#f3faff"></div>
<div class="a" style="left:1485px;top:930.3px;width:60px;height:1px;background:#f0f2f5"></div>
<div class="a" style="left:1547px;top:930.3px;width:333px;height:1px;background:#f0f2f5"></div>
<div class="tag" style="left:1488px;top:893.8px">消息</div>
<div class="msg" style="left:1550px;top:897.8px">服装快时尚品牌的环保 “谎言” 被戳破?</div>
<div class="a" style="left:1485px;top:980.8px;width:60px;height:1px;background:#f0f2f5"></div>
<div class="a" style="left:1547px;top:980.8px;width:333px;height:1px;background:#f0f2f5"></div>
<div class="tag" style="left:1488px;top:944.3px">消息</div>
<div class="msg" style="left:1550px;top:948.3px">共享充电宝收费乱象，为何屡禁不止?</div>
<div class="a" style="left:1485px;top:983.8px;width:60px;height:48.5px;background:#f3faff"></div>
<div class="a" style="left:1547px;top:983.8px;width:333px;height:48.5px;background:#f3faff"></div>
<div class="a" style="left:1485px;top:1031.4px;width:60px;height:1px;background:#f0f2f5"></div>
<div class="a" style="left:1547px;top:1031.4px;width:333px;height:1px;background:#f0f2f5"></div>
<div class="tag" style="left:1488px;top:994.8px">消息</div>
<div class="msg" style="left:1550px;top:998.8px">新兴职业高薪背后，隐藏着哪些挑战?</div>
<div class="a" style="left:1485px;top:1082.0px;width:60px;height:1px;background:#f0f2f5"></div>
<div class="a" style="left:1547px;top:1082.0px;width:333px;height:1px;background:#f0f2f5"></div>
<div class="tag" style="left:1488px;top:1045.4px">消息</div>
<div class="msg" style="left:1550px;top:1049.4px">酒店卫生乱象又现，出门住宿该如何选?</div>
<div class="a" style="left:1910px;top:120px;width:8px;height:880px;border-radius:4px;background:#e4e7ec"></div>
</body></html>
